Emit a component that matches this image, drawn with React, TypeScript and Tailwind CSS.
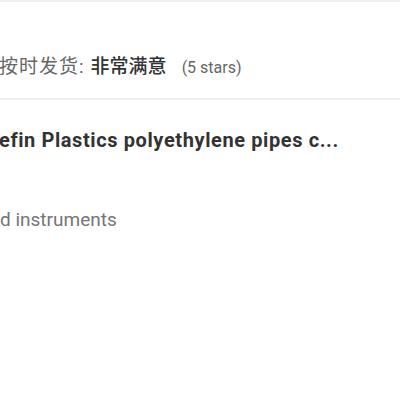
export default function App() {
  return (
    <div className="w-[400px] h-[400px] overflow-hidden bg-white" style={{ fontFamily: 'Roboto, "Noto Sans CJK SC", sans-serif' }}>
      <div className="border-t-2 border-[#eeeeee]" />
      <div className="pt-[51px] pb-[16px] border-b-2 border-[#eeeeee] flex items-baseline whitespace-nowrap">
        <span className="text-[19px] text-[#666666] -ml-[1px] tracking-[1px]">按时发货:</span>
        <span className="text-[19px] text-[#333333] font-medium ml-[6px]">非常满意</span>
        <span className="text-[16px] text-[#666666] ml-[15px]">(5 stars)</span>
      </div>
      <div className="pt-[26px] whitespace-nowrap">
        <div className="text-[20px] font-bold text-[#333333] -ml-[1px] tracking-[0.6px] leading-[28px]">efin Plastics polyethylene pipes c...</div>
        <div className="text-[19px] text-[#757575] mt-[52px] leading-[28px]">d instruments</div>
      </div>
    </div>
  );
}
